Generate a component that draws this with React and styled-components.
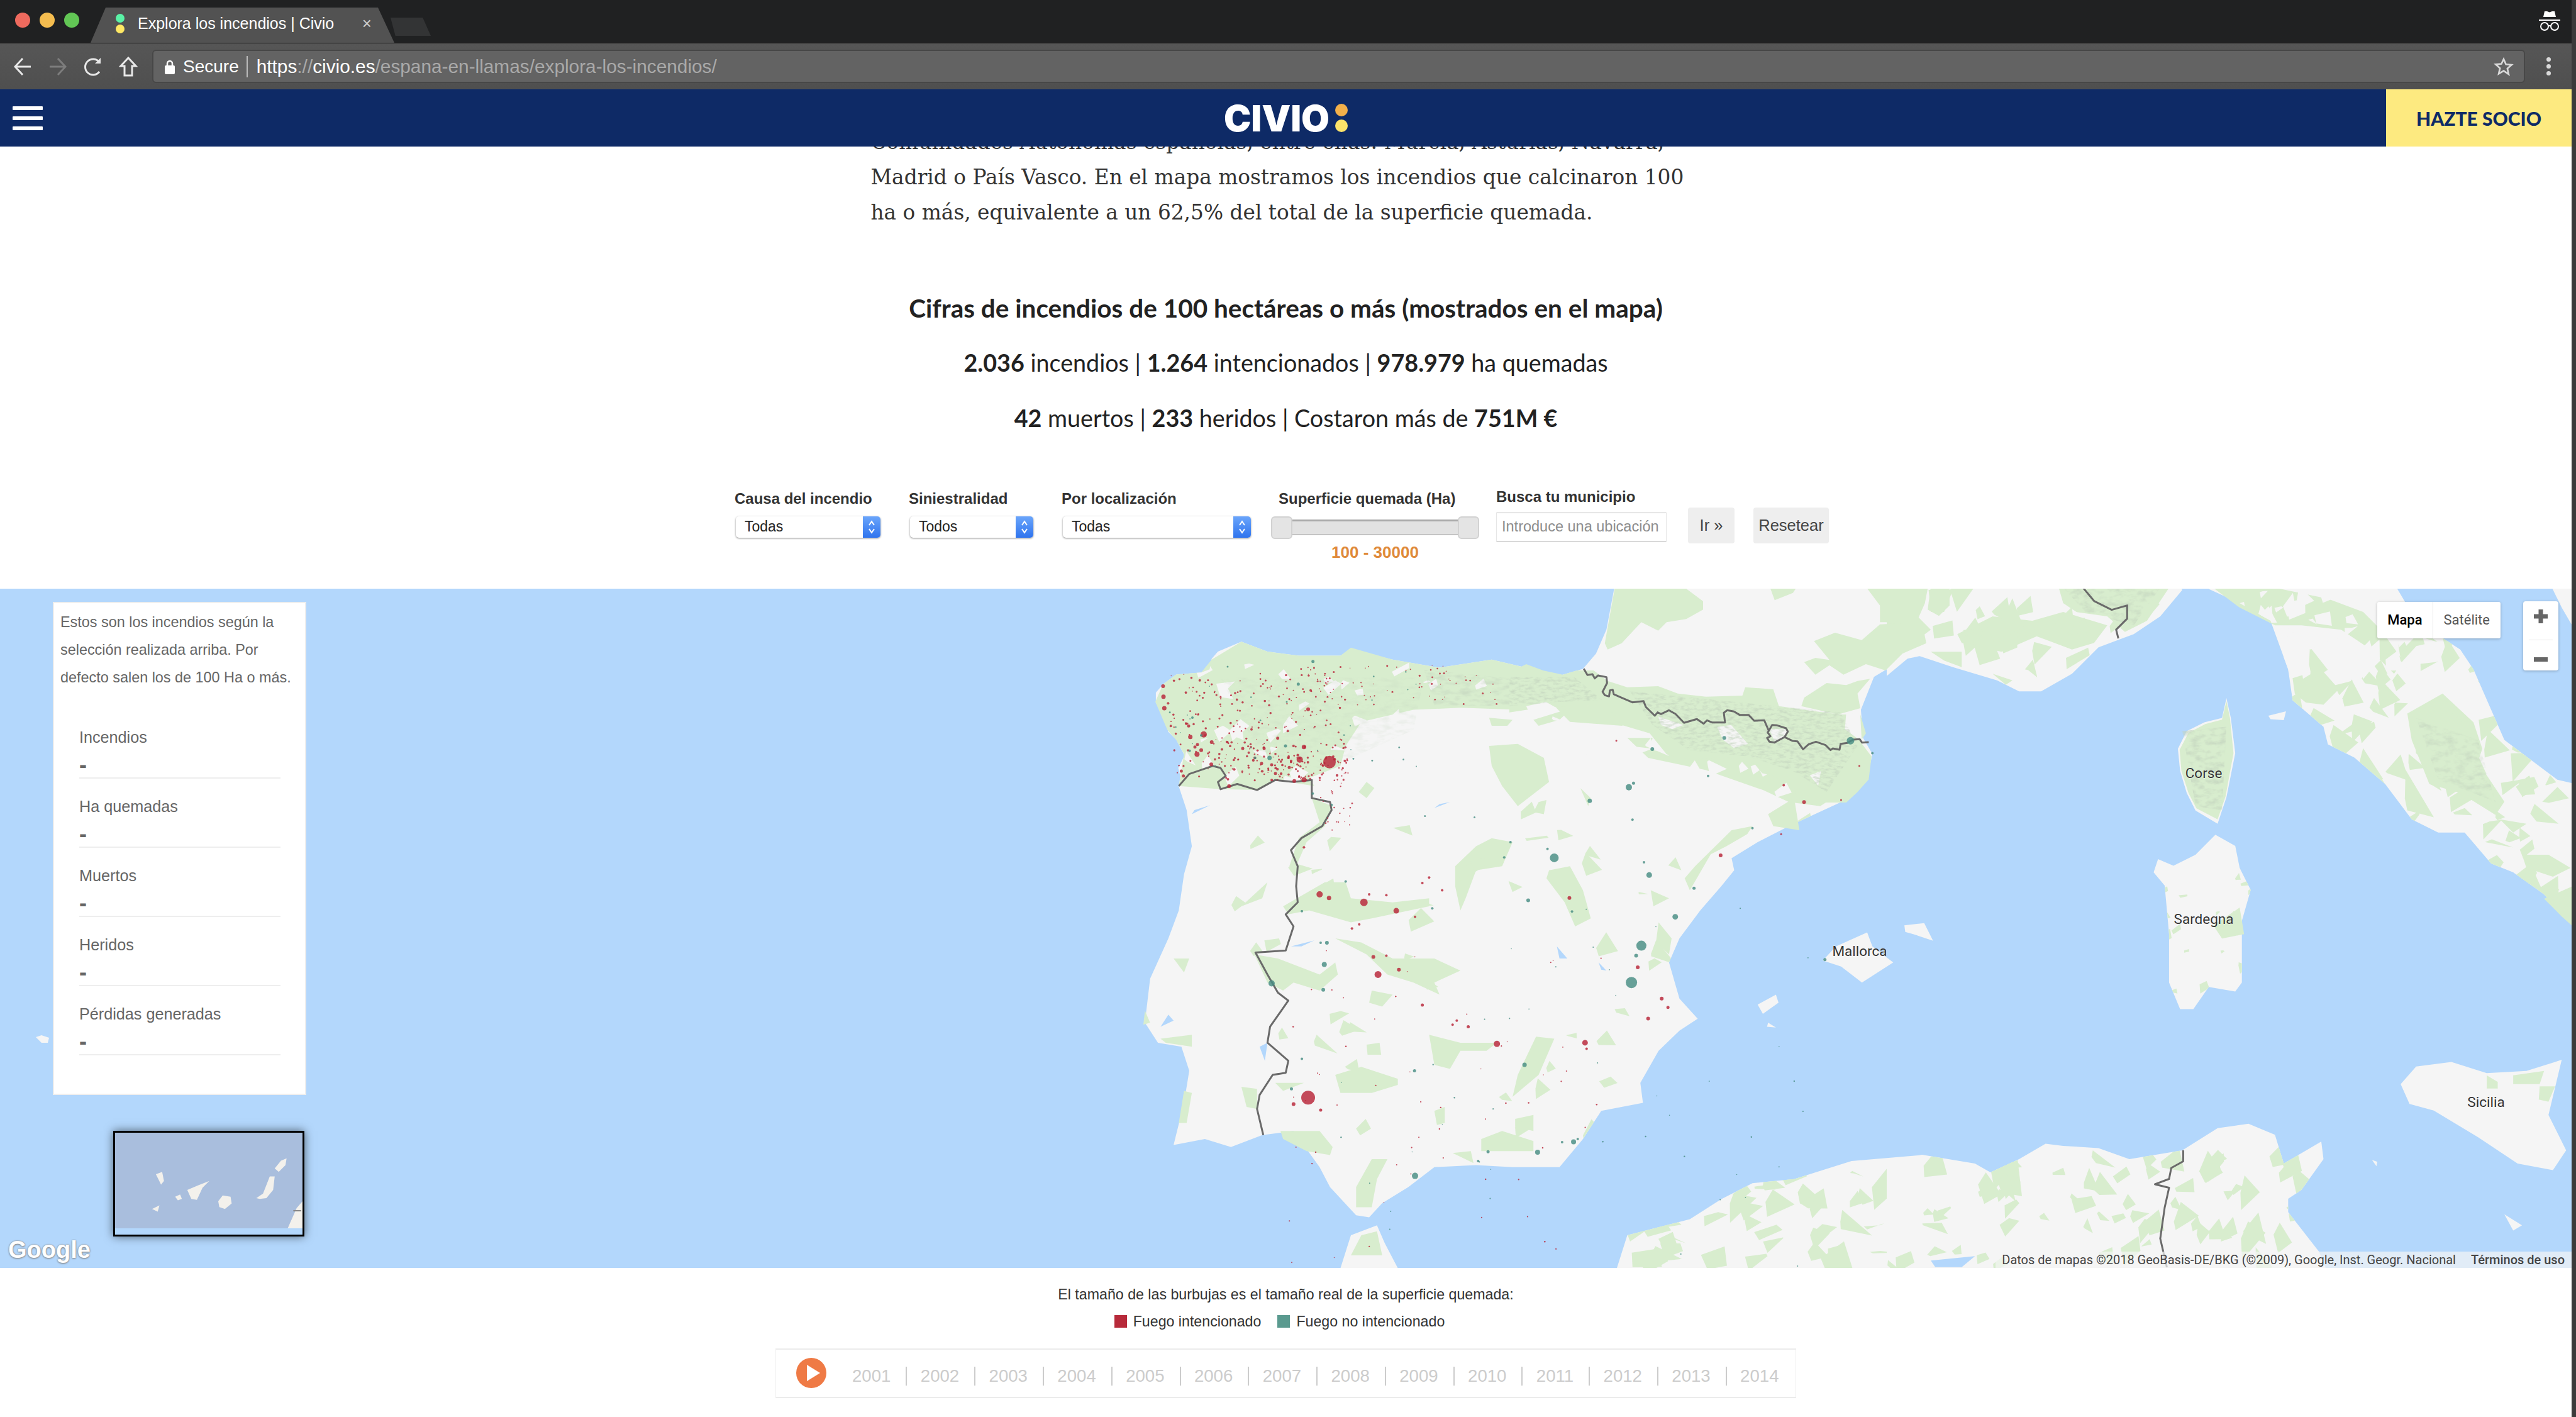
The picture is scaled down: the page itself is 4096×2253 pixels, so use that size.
import React from 'react'
import styled, { createGlobalStyle } from 'styled-components'

const SEA = '#b3d7fc'
const LAND = '#f5f5f5'
const FOREST = '#d8edce'
const RED = 'rgba(184, 36, 56, 0.82)'
const TEAL = 'rgba(72, 142, 132, 0.82)'
const SANS = '"Liberation Sans", Arial, sans-serif'
const LATO = 'Lato, "Liberation Sans", sans-serif'
const ROBOTO = 'Roboto, "Liberation Sans", sans-serif'

const GlobalStyle = createGlobalStyle`
  html, body { margin: 0; padding: 0; background: #fff; }
  * { box-sizing: border-box; }
`

const Screen = styled.div`
  width: 4096px;
  height: 2253px;
  display: grid;
  grid-template-columns: 4089px 7px;
  overflow: hidden;
  background: #fff;
`

const WindowEdge = styled.div`
  background: #3b3b3b;
`

const Page = styled.div`
  width: 4089px;
  display: flex;
  flex-direction: column;
`

/* browser chrome */
const TabStrip = styled.div`
  height: 69px;
  background: #202122;
  display: flex;
  align-items: flex-end;
  padding-left: 24px;
  border-bottom: 1px solid #191919;
`

const Lights = styled.div`
  display: flex;
  gap: 15px;
  align-self: flex-start;
  margin-top: 20px;
`

const Light = styled.span`
  width: 24px;
  height: 24px;
  border-radius: 50%;
  background: ${p => p.$color};
`

const Tab = styled.div`
  width: 483px;
  height: 56px;
  margin-left: 18px;
  padding: 0 36px 0 40px;
  background: #525252;
  clip-path: polygon(0 100%, 24px 0, calc(100% - 26px) 0, 100% 100%);
  display: flex;
  align-items: center;
  color: #fff;
  font: 25px ${SANS};
`

const Favicon = styled.span`
  display: flex;
  flex-direction: column;
  gap: 3px;
  margin-right: 21px;
  margin-top: -6px;
`

const FavDot = styled.span`
  width: 14px;
  height: 14px;
  border-radius: 50%;
  background: ${p => p.$color};
`

const TabTitle = styled.span`
  flex: 1;
  margin-top: -6px;
  white-space: nowrap;
`

const TabClose = styled.span`
  color: #ccc;
  font-size: 26px;
  margin-top: -6px;
`

const NewTab = styled.div`
  width: 64px;
  height: 29px;
  margin: 0 0 11px -6px;
  background: #333435;
  clip-path: polygon(0 0, 80% 0, 100% 100%, 12% 100%);
`

const Incognito = styled.svg`
  margin-left: auto;
  margin-right: 18px;
  align-self: flex-start;
  margin-top: 17px;
`

const Toolbar = styled.div`
  height: 73px;
  background: linear-gradient(#565656, #4f4f4f);
  display: flex;
  align-items: center;
  padding-left: 8px;
`

const ToolIcon = styled.div`
  width: 56px;
  display: flex;
  justify-content: center;
  color: ${p => (p.$dim ? '#7d7d7d' : '#e8e8e8')};
`

const Omnibox = styled.div`
  flex: 1;
  height: 53px;
  margin-left: 10px;
  padding: 0 16px 0 18px;
  background: #636363;
  border: 2px solid #474747;
  border-radius: 6px;
  display: flex;
  align-items: center;
  font: 28px ${SANS};
  color: #a9a9a9;
  white-space: nowrap;
`

const Secure = styled.span`
  color: #fff;
  margin-left: 13px;
  padding-right: 12px;
  border-right: 2px solid #bbb;
  line-height: 34px;
`

const Url = styled.span`
  margin-left: 14px;
  flex: 1;
  font-size: 29.8px;
`

const UrlHost = styled.span`
  color: #fff;
`

const MoreCell = styled.div`
  width: 74px;
  display: flex;
  flex-direction: column;
  align-items: center;
  gap: 4px;
`

const MoreDot = styled.span`
  width: 7px;
  height: 7px;
  border-radius: 50%;
  background: #d9d9d9;
`

/* civio nav */
const Nav = styled.header`
  height: 91px;
  background: #0e2a66;
  display: grid;
  grid-template-columns: 1fr auto 1fr;
  align-items: center;
  position: relative;
  z-index: 2;
`

const Burger = styled.div`
  display: flex;
  flex-direction: column;
  gap: 10px;
  width: 48px;
  margin-left: 20px;
`

const BurgerBar = styled.span`
  height: 6px;
  background: #fff;
  border-radius: 1px;
`

const Logo = styled.div`
  display: flex;
  align-items: center;
  color: #fff;
  font: 900 58px Inter, "Liberation Sans", sans-serif;
  letter-spacing: 0;
`

const LogoDots = styled.span`
  display: flex;
  flex-direction: column;
  gap: 5px;
  margin-left: 9px;
`

const LogoDot = styled.span`
  width: 20px;
  height: 20px;
  border-radius: 50%;
  background: ${p => p.$color};
`

const JoinButton = styled.a`
  justify-self: end;
  width: 295px;
  height: 91px;
  background: #fdea80;
  color: #0e2a66;
  font: 900 30px ${LATO};
  display: flex;
  align-items: center;
  justify-content: center;
`

/* article */
const Main = styled.main`
  flex: 1;
  overflow: hidden;
  display: flex;
  flex-direction: column;
`

const Intro = styled.p`
  width: 1320px;
  margin: -35px auto 0;
  font: 32.8px/56px "DejaVu Serif", "Liberation Serif", serif;
  color: #333;
  white-space: nowrap;
`

const Stats = styled.section`
  margin-top: 95.5px;
  text-align: center;
  color: #222;
  font: 37.7px/56px ${LATO};
`

const StatsTitle = styled.h2`
  margin: 0 0 31px;
  font: 700 40.5px/56px ${LATO};
`

const StatsLine = styled.p`
  margin: 0 0 32px;
  &:last-child { margin: 0; }
  b { font-weight: 700; }
`

const FilterBar = styled.div`
  height: 243.5px;
  padding: 82px 0 0 1168px;
  display: flex;
  align-items: flex-start;
`

const Filter = styled.div`
  width: ${p => p.$w}px;
  margin-left: ${p => p.$ml || 0}px;
  padding-top: ${p => p.$pt || 0}px;
`

const FilterLabel = styled.label`
  display: block;
  height: 30px;
  margin-bottom: ${p => p.$mb || 13}px;
  font: 700 24px/30px ${SANS};
  color: #333;
  white-space: nowrap;
  padding-left: ${p => p.$pl || 0}px;
`

const Select = styled.div`
  height: 34px;
  margin-left: 2px;
  background: #fff;
  border-radius: 5px;
  box-shadow: 0 1px 3px rgba(0, 0, 0, 0.45);
  display: flex;
  align-items: center;
  justify-content: space-between;
  overflow: hidden;
  padding-left: 14px;
  font: 23px ${SANS};
  color: #222;
`

const SelectArrow = styled.span`
  width: 28px;
  height: 100%;
  background: linear-gradient(#6aa5fb, #2f74ee);
  display: flex;
  align-items: center;
  justify-content: center;
`

const Slider = styled.div`
  height: 36px;
  display: flex;
  align-items: center;
`

const SliderHandle = styled.span`
  width: 34px;
  height: 36px;
  background: #e4e4e4;
  border: 2px solid #d2d2d2;
  border-radius: 6px;
  flex: none;
`

const SliderTrack = styled.span`
  flex: 1;
  height: 25px;
  background: #e2e2e2;
  border-top: 3px solid #aaa;
  border-bottom: 2px solid #c4c4c4;
`

const SliderValue = styled.div`
  margin-top: 8px;
  text-align: center;
  color: #df8a3a;
  font: 700 26px/26px ${SANS};
`

const PlaceInput = styled.input`
  width: 100%;
  height: 46px;
  padding: 0 8px;
  border: 1px solid #e6e6e6;
  border-top-color: #b8b8b8;
  border-bottom-color: #b8b8b8;
  outline: 0;
  font: 23.5px ${SANS};
  color: #333;
  &::placeholder { color: #8d8d8d; opacity: 1; }
`

const GreyButton = styled.button`
  width: ${p => p.$w}px;
  margin-left: ${p => p.$ml}px;
  margin-top: 32px;
  height: 57px;
  padding: 0;
  border: 0;
  border-radius: 4px;
  background: #eee;
  color: #444;
  font: 25.5px ${SANS};
`

/* map */
const MapFrame = styled.section`
  position: relative;
  height: 1080px;
  flex: none;
  background: ${SEA};
  overflow: hidden;
`

const MapArt = styled.svg`
  display: block;
`

const InfoPanel = styled.aside`
  position: absolute;
  left: 84px;
  top: 21px;
  width: 403px;
  height: 784px;
  padding: 8px 0 0 10px;
  background: #fff;
  border: 2px solid #eee;
  color: #666;
`

const InfoText = styled.p`
  margin: 0 0 29px;
  font: 23.4px/44px ${SANS};
  white-space: nowrap;
`

const InfoRow = styled.div`
  width: 320px;
  height: 110px;
  margin-left: 30px;
  padding-top: 24px;
  border-bottom: 2px solid #eee;
`

const InfoLabel = styled.div`
  font: 25.2px/40px ${SANS};
`

const InfoValue = styled.div`
  font: 700 36px/48px ${SANS};
`

const CanaryInset = styled.div`
  position: absolute;
  left: 180px;
  top: 862px;
  width: 304px;
  height: 168px;
  border: 3px solid #000;
  background: #a9bedd;
  box-shadow: 0 0 14px rgba(0, 0, 0, 0.55);
`

const GoogleMark = styled.span`
  position: absolute;
  left: 13px;
  bottom: 7px;
  color: #fff;
  font: 700 38px/44px ${SANS};
  text-shadow: 0 0 2px #777, 0 1px 3px #888;
`

const MapType = styled.div`
  position: absolute;
  right: 113px;
  top: 21px;
  height: 58px;
  display: flex;
  background: #fff;
  border-radius: 3px;
  box-shadow: 0 1px 4px rgba(0, 0, 0, 0.25);
  font: 22px/58px ${ROBOTO};
`

const MapTypeItem = styled.span`
  padding: 0 ${p => (p.$on ? 16 : 17)}px;
  color: ${p => (p.$on ? '#000' : '#565656')};
  font-weight: ${p => (p.$on ? 500 : 400)};
  border-right: ${p => (p.$on ? '1px solid #e6e6e6' : '0')};
`

const ZoomBox = styled.div`
  position: absolute;
  right: 21px;
  top: 20px;
  width: 56px;
  height: 110px;
  display: flex;
  flex-direction: column;
  align-items: center;
  justify-content: space-around;
  background: #fff;
  border-radius: 4px;
  box-shadow: 0 1px 4px rgba(0, 0, 0, 0.25);
`

const ZoomRule = styled.span`
  width: 38px;
  height: 1px;
  background: #e6e6e6;
`

const Attribution = styled.div`
  position: absolute;
  right: 0;
  bottom: 0;
  height: 26px;
  display: flex;
  align-items: center;
  font: 20px/26px ${ROBOTO};
  color: #444;
  white-space: nowrap;
`

const AttrItem = styled.span`
  padding: 0 ${p => (p.$strong ? 11 : 10)}px 0 ${p => (p.$strong ? 14 : 10)}px;
  background: rgba(245, 245, 245, 0.7);
  font-weight: ${p => (p.$strong ? 500 : 400)};
`

/* below the map */
const Caption = styled.p`
  margin: 27px 0 13px;
  text-align: center;
  font: 23.2px/30px ${SANS};
  color: #333;
`

const Legend = styled.div`
  display: flex;
  justify-content: center;
  padding-right: 20px;
  font: 23.2px/30px ${SANS};
  color: #333;
`

const LegendItem = styled.span`
  display: flex;
  align-items: center;
  gap: 10px;
  margin: 0 13px;
`

const Swatch = styled.i`
  width: 20px;
  height: 20px;
  background: ${p => p.$color};
`

const Timeline = styled.div`
  width: 1623px;
  height: 79px;
  margin: 28px auto 0;
  padding: 0 0 0 32px;
  border: 1px solid #f0f0f0;
  border-top: 2px solid #ebebeb;
  border-bottom: 2px solid #ebebeb;
  display: flex;
  align-items: center;
`

const PlayButton = styled.svg`
  flex: none;
  margin: -2px 41px 0 0;
`

const Year = styled.span`
  padding-right: 24px;
  margin-right: 21.4px;
  margin-top: 8px;
  border-right: 2px solid #ccc;
  color: #ccc;
  font: 27.6px/30px ${SANS};
  &:last-child { border: 0; margin: 8px 0 0; padding: 0; }
`

/* map drawing data, every list is in the coordinates of the crop it was read from */
const iberiaLand = '985,-103 970,0 950,60 925,98 880,115 800,90 750,75 650,95 560,75 480,50 460,65 380,65 320,55 270,30 225,55 213,73 209,99 193,107 145,112 120,136 106,157 106,183 120,199 137,225 129,254 145,274 161,314 149,345 153,366 150,391 165,450 175,540 160,610 150,700 130,770 95,870 85,980 110,1030 155,1040 170,1100 160,1180 140,1285 200,1270 250,1290 310,1260 370,1250 420,1340 440,1390 490,1460 515,1465 540,1430 590,1390 640,1340 720,1335 790,1340 880,1340 925,1270 960,1200 1040,1180 1035,1130 1070,1050 1110,1000 1145,970 1110,920 1090,830 1110,770 1150,700 1190,640 1215,600 1210,570 1260,530 1320,490 1420,430 1470,370 1480,310 1462,270 1458,200 1483,118 1538,75 1575,65 1575,-103'

const iberiaIslands = [
  '1410,790 1470,755 1480,790 1520,830 1460,880 1420,840 1385,825',
  '1260,935 1295,910 1300,930 1270,958',
  '1280,980 1295,992 1278,990',
  '460,1592 480,1510 530,1485 545,1530 570,1592',
  '990,1592 1010,1510 1070,1490 1130,1470 1190,1420 1250,1380 1330,1370 1440,1325 1575,1310 1575,1592'
]

const iberiaForest = [
  '213,75 270,30 320,55 380,65 460,65 480,45 560,75 650,95 750,75 800,90 880,118 930,100 975,170 1050,190 1000,240 900,230 870,190 800,200 690,195 600,200 500,230 470,290 460,340 400,370 410,390 335,375 300,400 230,398 150,390 160,310 145,275 128,250 105,180 120,136 145,112 193,107',
  '405,420 445,440 430,490 395,530 375,590 362,590 380,520 420,480',
  '745,290 800,285 850,320 860,380 800,440 770,390 750,340',
  '745,220 790,225 780,240 750,240',
  '830,225 905,195 880,225 840,240',
  '510,380 525,395 510,420 495,405',
  '840,430 855,425 850,460 830,455',
  '920,395 940,420 935,440',
  '1010,270 1070,270 1150,310 1250,300 1400,330 1440,390 1380,440 1320,430 1270,400 1160,350 1050,320',
  '1210,500 1250,490 1240,510 1200,540 1170,560 1130,650 1120,620 1140,590',
  '1280,460 1330,420 1340,500 1290,490',
  '350,690 430,630 470,630 480,670 560,680 630,670 630,690 520,720 480,730 400,700 360,710',
  '680,590 720,540 750,520 790,530 770,590 720,600 700,670 690,700 680,640',
  '860,600 900,590 925,650 940,720 910,740 890,680 855,620',
  '450,770 500,780 560,820 640,820 690,850 640,880 650,910 600,880 550,860 510,810',
  '520,900 560,910 540,940 515,930',
  '295,810 340,820 420,860 450,830 455,860 420,900 370,880 350,900 320,880',
  '270,690 320,630 310,670',
  '1055,650 1090,670 1060,690',
  '1070,730 1095,770 1090,810 1065,780',
  '630,1010 690,1030 760,1030 740,1050 690,1050 670,1095 640,1085',
  '835,1015 870,1020 840,1110 790,1165 800,1110',
  '450,1110 500,1090 570,1120 570,1135 520,1155 460,1155',
  '335,1130 390,1130 350,1150',
  '270,1140 300,1145 300,1195 280,1190',
  '345,1250 420,1250 445,1290 440,1310 395,1300 350,1270',
  '520,1320 550,1320 530,1370 520,1440 490,1440 490,1390',
  '730,1270 770,1250 830,1275 830,1300 760,1300 730,1300',
  '675,1305 710,1300 715,1330',
  '795,1220 830,1210 830,1250 795,1240',
  '640,1200 660,1190 660,1230 645,1235',
  '510,1035 535,1030 538,1060 512,1060',
  '140,820 170,820 160,855',
  '85,950 95,980 82,985',
  '115,1020 175,1010 175,1040 125,1030',
  '160,1150 175,1155 165,1230 150,1230',
  '480,1560 500,1510 530,1500 540,1560'
]

const iberiaWater = [
  '650,435 670,430 640,445',
  '875,790 895,820 880,820',
  '955,830 970,850 960,848',
  '305,1040 320,1030 315,1075',
  '130,960 140,975 115,990',
  '365,790 410,775 385,790',
  '180,450 210,438 175,460'
]

const iberiaBorders = [
  '150,390 170,360 215,340 230,345 240,365 225,380 230,398 262,385 300,400 335,375 370,380 405,375 405,420 440,430 443,450 425,490 385,520 365,550 378,590 375,640 378,680 355,710 370,740 355,800 297,805 320,860 340,905 360,925 325,990 320,1030 360,1075 355,1105 330,1110 305,1160 300,1195 312,1260'
]

const franceForest = [
  '375,30 630,30 690,90 690,130 630,175 560,190 530,230 470,190 400,290 350,320 340,290',
  '930,30 1020,30 1010,50 945,85',
  '1275,30 1490,30 1480,100 1450,190 1320,190 1320,110',
  '1500,30 1568,30 1568,110 1530,160 1490,130',
  '1085,280 1160,240 1255,275 1320,200 1470,190 1485,290 1400,340 1340,420 1270,390 1190,440 1140,395 1090,440 1050,380 1090,360 1140,370',
  '1050,550 1130,480 1200,490 1240,470 1285,460 1240,530 1250,600 1170,630 1040,590',
  '0,430 60,390 120,420 190,440 240,420 300,420 350,470 420,500 530,495 600,530 700,545 830,540 840,500 940,510 960,590 1060,610 1180,630 1250,630 1270,720 1250,760 1290,830 1280,940 1240,1000 1200,1050 1030,1050 1010,960 930,920 900,910 870,860 760,830 650,850 560,820 500,720 400,680 370,620 280,590 220,590 100,600 0,620'
]

const franceClearings = [
  '60,590 130,570 170,600 80,650',
  '530,640 620,680 580,700 540,680',
  '740,690 790,680 850,770 800,790 760,750',
  '925,700 990,700 985,740 945,760',
  '1070,920 1110,900 1100,970',
  '1200,620 1250,630 1255,760 1195,700'
]

const reliefZones = [
  '430,520 1180,620 1240,780 1130,1000 1010,900 850,830 640,800 510,680',
  '0,450 230,450 330,560 180,570 0,590'
]

const franceBorders = [
  '265,412 278,442 296,438 304,458 316,444 346,452 348,480 332,522 340,538 355,544 358,515 368,512 372,534 400,550 438,572 478,566 486,594 518,636 528,620 540,628 568,610 592,628 622,670 668,652 692,674 704,658 722,668 768,668 764,622 776,610 800,616 820,632 852,632 872,660 908,658 924,708 936,680 954,682 986,696 992,712 980,738 944,764 926,760 918,742 930,734 920,716 924,708 M980,738 1008,756 1026,758 1046,796 1066,772 1092,760 1126,776 1144,800 1152,792 1176,798 1180,770 1204,766 1224,750 1248,748 1256,764 1280,762'
]

const eastLand = '0,205 60,155 150,185 250,215 300,240 350,240 420,200 480,140 560,110 620,70 670,10 660,-5 730,-5 730,8 800,40 870,80 910,190 920,260 990,320 1000,360 1060,390 1130,450 1190,530 1250,560 1310,560 1370,630 1420,650 1490,700 1562,780 1562,450 1520,440 1400,350 1330,190 1300,145 1200,80 1150,-5 0,-5'

const eastIslands = [
  '770,255 780,300 790,380 770,480 750,540 700,510 680,470 665,420 660,370 680,330 720,310 760,300',
  '745,565 790,590 800,640 825,690 805,760 805,900 790,920 730,910 695,960 665,960 640,900 640,790 630,680 605,650 615,620 650,635 700,610',
  '1165,1130 1200,1090 1280,1080 1360,1105 1450,1100 1530,1075 1500,1200 1540,1280 1510,1325 1430,1310 1340,1250 1240,1190 1185,1175',
  '40,770 85,765 105,805 60,790 42,785',
  '865,295 905,285 900,305 870,303',
  '1400,1425 1440,1450 1420,1462',
  '1100,1302 1112,1306 1110,1316',
  '1508,5 1562,5 1562,105 1530,50',
  '0,1310 80,1290 200,1310 235,1330 300,1300 360,1265 400,1270 480,1275 550,1300 670,1280 750,1230 820,1220 880,1245 900,1310 985,1260 990,1300 940,1370 910,1390 910,1420 980,1510 1000,1560 0,1560'
]

const eastForest = [
  '0,30 60,60 100,100 60,130 0,110',
  '95,10 150,10 130,60 100,60',
  '160,110 240,70 330,80 400,60 500,90 470,130 420,145 340,115 260,150 170,130',
  '390,5 640,5 590,80 540,105 500,70 430,60 400,40',
  '100,150 170,150 170,185 130,170',
  '240,200 285,215 270,225',
  '740,5 880,5 1000,30 1080,60 1120,100 1170,170 1150,200 1090,140 1030,100 940,90 880,90 800,50',
  '920,210 985,190 1025,235 990,270 950,265 925,245',
  '1180,290 1260,245 1330,310 1350,370 1340,400 1400,490 1380,520 1300,470 1230,450 1210,400 1190,350',
  '1390,530 1450,540 1420,560',
  '1440,610 1500,610 1550,640 1510,660 1450,640',
  '1490,710 1558,680 1558,775 1530,750',
  '770,262 778,300 786,380 768,478 750,530 702,505 684,470 668,420 664,372 684,334 722,314 760,304',
  '740,770 800,730 810,790 760,800',
  '1360,1110 1385,1125 1385,1140 1360,1140',
  '1420,1110 1490,1100 1480,1130 1420,1130',
  '1480,1135 1515,1135 1500,1170 1478,1165'
]

const eastBorders = [
  '445,5 470,35 510,55 545,45 545,75 520,100 525,120',
  '672,1280 672,1305 645,1320 640,1345 608,1357 640,1365 630,1410 620,1480 635,1545'
]

const iberiaRed = [
  [398, 1167, 11], [532, 860, 5.5], [760, 1033, 5], [929, 1030, 4.5], [567, 701, 4.5], [505, 680, 6], [420, 660, 5], [438, 669, 3.5],
  [523, 816, 3], [617, 936, 2.5], [572, 848, 3], [899, 669, 3], [1189, 563, 3], [1349, 430, 3], [1076, 920, 3], [1050, 970, 3],
  [1088, 942, 2.5], [1030, 842, 3], [705, 990, 2.5], [675, 985, 2], [683, 975, 2], [932, 1045, 2], [370, 1183, 3], [422, 1198, 2.5],
  [390, 543, 2], [548, 813, 2], [630, 618, 2], [617, 632, 2], [655, 650, 2], [482, 745, 2], [496, 735, 2], [515, 660, 2],
  [548, 662, 2], [603, 716, 2], [1305, 510, 1.5], [1455, 340, 1.5], [1310, 388, 2], [1420, 425, 1.5], [989, 277, 1.5]
]

const iberiaTeal = [
  [1018, 880, 9], [1037, 788, 8], [870, 569, 7], [1052, 612, 4.5], [1102, 716, 4.5], [1013, 393, 5], [1022, 383, 2.5], [938, 427, 3.5],
  [1058, 298, 3], [1438, 277, 6], [1480, 308, 2], [328, 882, 5], [429, 835, 4], [434, 781, 3], [422, 781, 2], [427, 898, 3],
  [820, 675, 3], [904, 703, 2], [1138, 645, 2.5], [1027, 813, 3], [813, 1085, 3.5], [603, 1362, 5], [838, 1303, 4], [907, 1277, 4],
  [915, 1270, 2], [743, 1302, 2.5], [724, 1325, 2], [366, 1145, 2.5], [386, 1070, 2], [602, 1100, 2.5], [1196, 270, 3], [1389, 823, 2.5],
  [786, 530, 2], [774, 568, 2], [857, 547, 2], [1042, 580, 2], [1020, 474, 2], [1165, 365, 2], [885, 1278, 2], [1250, 495, 2],
  [470, 628, 2], [386, 702, 2], [636, 695, 2], [717, 468, 1.5], [622, 465, 1.5]
]

const galiciaRed = [
  [282, 380, 5], [218, 392, 3.5], [250, 475, 4], [240, 440, 2.5], [252, 428, 2.5], [270, 455, 3], [318, 523, 3], [88, 150, 3],
  [90, 200, 3.5], [94, 255, 3.5], [112, 232, 2], [175, 555, 2.5], [185, 578, 2.5], [210, 340, 2.5], [125, 340, 2], [320, 417, 3],
  [468, 447, 2.5], [570, 447, 2.5], [635, 398, 2.5], [510, 356, 2], [780, 260, 3], [760, 440, 3.5], [740, 500, 5], [558, 518, 2.5],
  [606, 525, 2.5], [624, 566, 2.5], [690, 538, 2.5], [714, 602, 3], [760, 596, 4], [403, 627, 3], [683, 364, 2], [404, 374, 1.5],
  [396, 416, 1.5], [263, 122, 2], [417, 235, 1.5], [792, 170, 2], [761, 177, 1.5], [882, 512, 10]
]

const galiciaTeal = [
  [733, 140, 2.5], [803, 32, 2.5], [596, 492, 3.5], [672, 435, 2.5], [270, 385, 2], [215, 458, 2], [527, 492, 2], [892, 716, 2],
  [802, 662, 2], [396, 57, 1.5], [678, 225, 1.5], [228, 300, 2]
]

// seeded so each run gives the same picture
const seeded = seed => () => {
  seed = (seed * 16807) % 2147483647
  return seed / 2147483647
}

const swarm = (seed, count, box, color, maxR) => {
  const next = seeded(seed)
  return Array.from({ length: count }, () => ({
    cx: box[0] + next() * box[2],
    cy: box[1] + next() * box[3],
    r: 0.7 + next() * maxR,
    color
  }))
}

// small angular patches, the way the forest layer of the base map breaks up
const shards = (seed, count, box, size) => {
  const next = seeded(seed)
  return Array.from({ length: count }, () => {
    const x = box[0] + next() * box[2]
    const y = box[1] + next() * box[3]
    const s = size * (0.5 + next())
    return [
      [x, y],
      [x + s * next(), y - s * next()],
      [x + s, y + s * (next() - 0.3)],
      [x + s * 0.3 * next(), y + s * next()]
    ].map(p => p.map(n => n.toFixed(1)).join(',')).join(' ')
  })
}

const fromIberia = color => ([x, y, r]) => ({ cx: 1750 + x / 1.206, cy: 65 + y / 1.568, r, color })
const fromGalicia = color => ([x, y, r]) => ({ cx: 1820 + x / 3, cy: 105 + y / 3, r, color })

const bubbles = [
  ...swarm(11, 230, [1862, 135, 280, 170], RED, 1.2),
  ...swarm(23, 90, [1930, 245, 215, 60], RED, 1.5),
  ...swarm(37, 70, [2050, 115, 330, 70], RED, 0.9),
  ...swarm(41, 26, [1860, 130, 400, 170], TEAL, 0.8),
  ...swarm(53, 60, [2120, 500, 780, 780], TEAL, 0.6),
  ...swarm(67, 60, [2050, 550, 500, 560], RED, 0.6),
  ...swarm(71, 22, [2100, 305, 50, 80], RED, 0.7),
  ...iberiaRed.map(fromIberia(RED)),
  ...iberiaTeal.map(fromIberia(TEAL)),
  ...galiciaRed.map(fromGalicia(RED)),
  ...galiciaTeal.map(fromGalicia(TEAL))
]

const Polys = ({ items, fill, ...rest }) => items.map(points => <polygon key={points} points={points} fill={fill} {...rest} />)

const Lines = ({ items }) =>
  items.flatMap(line => line.split(' M')).map(points => (
    <polyline key={points} points={points} fill="none" stroke="#6a6a6a" strokeWidth="3" strokeLinejoin="round" vectorEffect="non-scaling-stroke" />
  ))

const MapLabel = ({ x, y, children }) => (
  <text x={x} y={y} textAnchor="middle" fontFamily="Roboto, sans-serif" fontSize="22.5" fill="#333" stroke="#fff" strokeWidth="0.6" paintOrder="stroke">
    {children}
  </text>
)

const BaseMap = () => (
  <MapArt width="4089" height="1080" viewBox="0 0 4089 1080">
    <defs>
      <filter id="relief" x="0" y="0" width="1" height="1">
        <feTurbulence type="fractalNoise" baseFrequency="0.045 0.08" numOctaves="3" seed="5" />
        <feColorMatrix values="0 0 0 0 0.55  0 0 0 0 0.66  0 0 0 0 0.52  2.4 0 0 0 -1" />
        <feComposite in2="SourceAlpha" operator="in" />
      </filter>
      <clipPath id="iberiaClip">
        <polygon points={iberiaLand} />
        {iberiaIslands.map(points => <polygon key={points} points={points} />)}
      </clipPath>
      <clipPath id="eastClip">
        <polygon points={eastLand} />
        {eastIslands.map(points => <polygon key={points} points={points} />)}
      </clipPath>
    </defs>

    <g transform="translate(1750 65) scale(0.8292 0.6378)">
      <polygon points={iberiaLand} fill={LAND} />
      <Polys items={iberiaIslands} fill={LAND} />
      <Polys items={iberiaForest} fill={FOREST} />
      <g clipPath="url(#iberiaClip)">
        <Polys items={shards(101, 60, [250, 430, 1150, 900], 34)} fill={FOREST} />
        <Polys items={shards(103, 55, [1000, 1340, 570, 240], 44)} fill={FOREST} />
        <Polys items={shards(105, 46, [160, 80, 820, 300], 26)} fill={LAND} />
        <Polys items={shards(107, 26, [1020, 280, 420, 160], 28)} fill={LAND} />
      </g>
      <Polys items={iberiaWater} fill={SEA} />
      <polygon points="620,100 850,130 800,190 640,190" fill="#000" filter="url(#relief)" opacity="0.6" />
      <polygon points="230,120 620,120 600,250 430,350 300,300" fill="#000" filter="url(#relief)" opacity="0.25" />
    </g>

    <g transform="translate(3000 -5) scale(0.7015 0.7015)">
      <polygon points={eastLand} fill={LAND} />
      <Polys items={eastIslands} fill={LAND} />
      <Polys items={eastForest} fill={FOREST} />
      <g clipPath="url(#eastClip)">
        <Polys items={shards(201, 110, [880, 80, 680, 680], 44)} fill={FOREST} />
        <Polys items={shards(203, 30, [0, 0, 700, 200], 40)} fill={FOREST} />
        <Polys items={shards(205, 70, [0, 1290, 1000, 260], 40)} fill={FOREST} />
        <Polys items={shards(207, 40, [780, 0, 420, 200], 34)} fill={LAND} />
        <Polys items={shards(209, 18, [620, 620, 200, 340], 18)} fill={FOREST} />
      </g>
      <polygon points="1200,300 1340,350 1380,490 1250,440" fill="#000" filter="url(#relief)" opacity="0.6" />
      <polygon points="670,330 770,320 760,510 700,500" fill="#000" filter="url(#relief)" opacity="0.8" />
      <polygon points="400,5 620,5 560,90 450,60" fill="#000" filter="url(#relief)" opacity="0.7" />
      <polygon points="100,1530 200,1520 170,1545 110,1545" fill={SEA} />
      <Lines items={eastBorders} />
    </g>

    <g transform="translate(2400 -10) scale(0.4464 0.3333)">
      <Polys items={franceForest} fill={FOREST} />
      <Polys items={franceClearings} fill={LAND} />
      <Polys items={reliefZones} fill="#000" filter="url(#relief)" opacity="0.75" />
      <Lines items={franceBorders} />
    </g>

    <g transform="translate(1750 65) scale(0.8292 0.6378)">
      <Lines items={iberiaBorders} />
    </g>

    <polygon points="57,713 66,710 78,714 76,722 66,722" fill={LAND} />

    {bubbles.map((b, i) => (
      <circle key={i} cx={b.cx} cy={b.cy} r={b.r} fill={b.color} />
    ))}

    <MapLabel x={2957} y={584}>Mallorca</MapLabel>
    <MapLabel x={3504} y={301}>Corse</MapLabel>
    <MapLabel x={3504} y={533}>Sardegna</MapLabel>
    <MapLabel x={3953} y={824}>Sicilia</MapLabel>
  </MapArt>
)

const CanaryArt = () => (
  <svg width="298" height="162" viewBox="510 1243 836 226" preserveAspectRatio="none">
    <rect x="510" y="1455" width="836" height="14" fill={SEA} />
    <g fill="#f3f1ec">
      <polygon points="692,1335 720,1330 728,1350 715,1358" />
      <polygon points="778,1385 800,1380 808,1390 790,1393" />
      <polygon points="675,1412 708,1404 700,1418" />
      <polygon points="832,1370 880,1360 930,1350 900,1365 875,1392 850,1390" />
      <polygon points="970,1395 990,1382 1025,1385 1030,1400 1000,1412 975,1408" />
      <polygon points="1140,1388 1170,1378 1200,1340 1222,1340 1215,1370 1185,1388 1155,1390" />
      <polygon points="1222,1322 1250,1305 1275,1300 1270,1315 1240,1330" />
      <polygon points="1280,1455 1320,1410 1346,1395 1346,1455" />
    </g>
    <line x1="1305" y1="1416" x2="1340" y2="1416" stroke="#888" strokeWidth="3" />
  </svg>
)

const Chevrons = () => (
  <svg width="12" height="24" viewBox="0 0 12 24" fill="none" stroke="#fff" strokeWidth="2">
    <path d="M2 9l4-6 4 6M2 15l4 6 4-6" />
  </svg>
)

const FilterSelect = ({ value }) => (
  <Select>
    {value}
    <SelectArrow>
      <Chevrons />
    </SelectArrow>
  </Select>
)

const YEARS = [2001, 2002, 2003, 2004, 2005, 2006, 2007, 2008, 2009, 2010, 2011, 2012, 2013, 2014]
const TOTALS = ['Incendios', 'Ha quemadas', 'Muertos', 'Heridos', 'Pérdidas generadas']

const App = () => (
  <Screen>
    <GlobalStyle />
    <Page>
      <TabStrip>
        <Lights>
          <Light $color="#ee6a5e" />
          <Light $color="#f5bd4f" />
          <Light $color="#62c655" />
        </Lights>
        <Tab>
          <Favicon>
            <FavDot $color="#5af2a6" />
            <FavDot $color="#ffe864" />
          </Favicon>
          <TabTitle>Explora los incendios | Civio</TabTitle>
          <TabClose>×</TabClose>
        </Tab>
        <NewTab />
        <Incognito width="34" height="32" viewBox="0 0 34 32">
          <path d="M7 10L9 1h4l4 1.500L21 1h4l2 9z M0 14h34v2H0z" fill="#fff" />
          <circle cx="9" cy="25" r="6" fill="none" stroke="#fff" strokeWidth="2" />
          <circle cx="25" cy="25" r="6" fill="none" stroke="#fff" strokeWidth="2" />
          <path d="M15 24h4" stroke="#fff" strokeWidth="2" />
        </Incognito>
      </TabStrip>

      <Toolbar>
        <ToolIcon>
          <svg width="28" height="30" viewBox="0 0 28 30" fill="none" stroke="currentColor" strokeWidth="3">
            <path d="M27 15H3M14 2L2 15l12 13" />
          </svg>
        </ToolIcon>
        <ToolIcon $dim>
          <svg width="28" height="30" viewBox="0 0 28 30" fill="none" stroke="currentColor" strokeWidth="3">
            <path d="M1 15h24M14 2l12 13-12 13" />
          </svg>
        </ToolIcon>
        <ToolIcon>
          <svg width="30" height="32" viewBox="0 0 30 32" fill="none" stroke="currentColor" strokeWidth="3">
            <path d="M25 24a12.500 12.500 0 1 1 0-15" />
            <path d="M27 2v9h-9z" fill="currentColor" stroke="none" />
          </svg>
        </ToolIcon>
        <ToolIcon>
          <svg width="30" height="32" viewBox="0 0 30 32" fill="none" stroke="currentColor" strokeWidth="3">
            <path d="M15 2L3 15h6v15h12V15h6z" />
          </svg>
        </ToolIcon>
        <Omnibox>
          <svg width="16" height="24" viewBox="0 0 16 24">
            <path d="M4 11V7a4 4 0 0 1 8 0v4" fill="none" stroke="#fff" strokeWidth="2.500" />
            <rect x="0" y="10" width="16" height="14" rx="2" fill="#fff" />
          </svg>
          <Secure>Secure</Secure>
          <Url>
            <UrlHost>https</UrlHost>://<UrlHost>civio.es</UrlHost>/espana-en-llamas/explora-los-incendios/
          </Url>
          <svg width="32" height="32" viewBox="0 0 24 24" fill="none" stroke="#d8d8d8" strokeWidth="2">
            <path d="M12 3l2.700 6.200 6.800.6-5.100 4.500 1.500 6.700L12 17l-5.900 3.500 1.500-6.700-5.100-4.500 6.800-.6z" />
          </svg>
        </Omnibox>
        <MoreCell>
          <MoreDot />
          <MoreDot />
          <MoreDot />
        </MoreCell>
      </Toolbar>

      <Nav>
        <Burger>
          <BurgerBar />
          <BurgerBar />
          <BurgerBar />
        </Burger>
        <Logo>
          CIVIO
          <LogoDots>
            <LogoDot $color="#f3b04a" />
            <LogoDot $color="#fbe36a" />
          </LogoDots>
        </Logo>
        <JoinButton>HAZTE SOCIO</JoinButton>
      </Nav>

      <Main>
        <Intro>
          Comunidades Autónomas españolas, entre ellas: Murcia, Asturias, Navarra,
          <br />
          Madrid o País Vasco. En el mapa mostramos los incendios que calcinaron 100
          <br />
          ha o más, equivalente a un 62,5% del total de la superficie quemada.
        </Intro>

        <Stats>
          <StatsTitle>Cifras de incendios de 100 hectáreas o más (mostrados en el mapa)</StatsTitle>
          <StatsLine>
            <b>2.036</b> incendios | <b>1.264</b> intencionados | <b>978.979</b> ha quemadas
          </StatsLine>
          <StatsLine>
            <b>42</b> muertos | <b>233</b> heridos | Costaron más de <b>751M €</b>
          </StatsLine>
        </Stats>

        <FilterBar>
          <Filter $w={232} $pt={3}>
            <FilterLabel>Causa del incendio</FilterLabel>
            <FilterSelect value="Todas" />
          </Filter>
          <Filter $w={198} $ml={45} $pt={3}>
            <FilterLabel>Siniestralidad</FilterLabel>
            <FilterSelect value="Todos" />
          </Filter>
          <Filter $w={301} $ml={45} $pt={3}>
            <FilterLabel>Por localización</FilterLabel>
            <FilterSelect value="Todas" />
          </Filter>
          <Filter $w={331} $ml={32} $pt={3}>
            <FilterLabel $pl={12}>Superficie quemada (Ha)</FilterLabel>
            <Slider>
              <SliderHandle />
              <SliderTrack />
              <SliderHandle />
            </Slider>
            <SliderValue>100 - 30000</SliderValue>
          </Filter>
          <Filter $w={271} $ml={27}>
            <FilterLabel $mb={10}>Busca tu municipio</FilterLabel>
            <PlaceInput placeholder="Introduce una ubicación" />
          </Filter>
          <GreyButton $w={74} $ml={34}>Ir »</GreyButton>
          <GreyButton $w={120} $ml={30}>Resetear</GreyButton>
        </FilterBar>

        <MapFrame>
          <BaseMap />
          <InfoPanel>
            <InfoText>
              Estos son los incendios según la
              <br />
              selección realizada arriba. Por
              <br />
              defecto salen los de 100 Ha o más.
            </InfoText>
            {TOTALS.map(label => (
              <InfoRow key={label}>
                <InfoLabel>{label}</InfoLabel>
                <InfoValue>-</InfoValue>
              </InfoRow>
            ))}
          </InfoPanel>
          <CanaryInset>
            <CanaryArt />
          </CanaryInset>
          <GoogleMark>Google</GoogleMark>
          <MapType>
            <MapTypeItem $on>Mapa</MapTypeItem>
            <MapTypeItem>Satélite</MapTypeItem>
          </MapType>
          <ZoomBox>
            <svg width="22" height="22" viewBox="0 0 22 22" fill="#666">
              <path d="M7.500 0h7v7.500H22v7h-7.500V22h-7v-7.500H0v-7h7.500z" />
            </svg>
            <ZoomRule />
            <svg width="22" height="8" viewBox="0 0 22 8" fill="#666">
              <rect width="22" height="7" />
            </svg>
          </ZoomBox>
          <Attribution>
            <AttrItem>Datos de mapas ©2018 GeoBasis-DE/BKG (©2009), Google, Inst. Geogr. Nacional</AttrItem>
            <AttrItem $strong>Términos de uso</AttrItem>
          </Attribution>
        </MapFrame>

        <Caption>El tamaño de las burbujas es el tamaño real de la superficie quemada:</Caption>
        <Legend>
          <LegendItem>
            <Swatch $color="#b72a3a" />
            Fuego intencionado
          </LegendItem>
          <LegendItem>
            <Swatch $color="#5a9a8f" />
            Fuego no intencionado
          </LegendItem>
        </Legend>

        <Timeline>
          <PlayButton width="48" height="48" viewBox="0 0 48 48">
            <circle cx="24" cy="24" r="24" fill="#ef7a45" />
            <path d="M17 11l21 13-21 13z" fill="#fff" />
          </PlayButton>
          {YEARS.map(year => (
            <Year key={year}>{year}</Year>
          ))}
        </Timeline>
      </Main>
    </Page>
    <WindowEdge />
  </Screen>
)

export default App
